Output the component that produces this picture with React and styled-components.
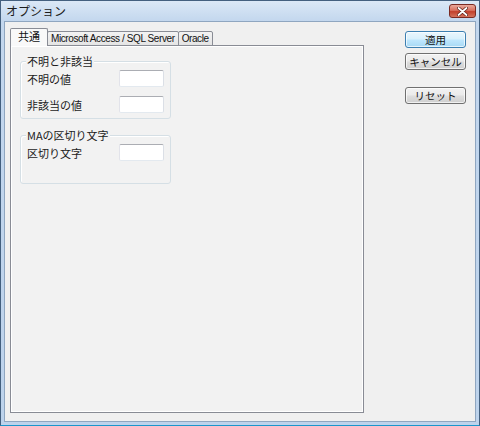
import React from 'react';
import styled, { createGlobalStyle } from 'styled-components';

const GlobalStyle = createGlobalStyle`
  body {
    margin: 0;
    background: #f0f0f0;
    font-family: "Liberation Sans", "Noto Sans CJK JP", sans-serif;
  }
`;

const Window = styled.div`
  width: 480px;
  height: 426px;
  box-sizing: border-box;
  display: flex;
  flex-direction: column;
  padding: 0 3px 3px 3px;
  border: 1px solid #44607f;
  border-bottom-color: #1a96cc;
  background: linear-gradient(to bottom, #dbe8f6 0px, #c3d7ee 20px, #bdd3ec 100%);
`;

const TitleBar = styled.div`
  height: 20px;
  display: flex;
  align-items: flex-start;
  justify-content: space-between;
  padding-left: 2px;
`;

const Title = styled.span`
  font-family: "Noto Sans CJK JP", sans-serif;
  font-size: 12px;
  line-height: 20px;
  color: #1b1b1b;
`;

const CloseButton = styled.div`
  width: 27px;
  height: 14px;
  margin-top: 3px;
  box-sizing: border-box;
  border: 1px solid #7a2a22;
  border-radius: 3px;
  background: linear-gradient(to bottom, #e9a99c 0%, #d8705f 45%, #c2402c 55%, #d4735d 100%);
  display: flex;
  align-items: center;
  justify-content: center;
`;

const Client = styled.div`
  flex: 1;
  display: flex;
  background: #f0f0f0;
  border: 1px solid #8fa6c0;
  padding: 7px 0 8px 5px;
`;

const TabControl = styled.div`
  width: 354px;
  display: flex;
  flex-direction: column;
`;

const TabStrip = styled.div`
  display: flex;
  align-items: flex-end;
  height: 17px;
  position: relative;
  z-index: 1;
  margin-bottom: -1px;
`;

const Tab = styled.div`
  height: ${p => (p.$active ? '18px' : '15px')};
  box-sizing: border-box;
  padding: 0 ${p => (p.$active ? '7px' : '3px')};
  margin-left: ${p => (p.$active ? '0' : '-1px')};
  border: 1px solid #898c95;
  border-bottom: ${p => (p.$active ? 'none' : '1px solid #898c95')};
  border-radius: 2px 2px 0 0;
  background: ${p => (p.$active ? '#f9f9f9' : 'linear-gradient(to bottom, #f3f3f3, #e4e4e4)')};
  font-size: ${p => (p.$active ? '11px' : '10px')};
  letter-spacing: ${p => (p.$active ? '0' : '-0.4px')};
  line-height: ${p => (p.$active ? '16px' : '13px')};
  color: #111;
  white-space: nowrap;
  font-family: "Liberation Sans", "Noto Sans CJK JP", sans-serif;
`;

const Panel = styled.div`
  flex: 1;
  border: 1px solid #898c95;
  box-shadow: inset 1px 1px 0 #ffffff, inset -1px -1px 0 #ffffff;
  background: #f2f2f2;
  padding: 9px 0 0 9px;
`;

const Group = styled.fieldset`
  width: 151px;
  box-sizing: border-box;
  margin: ${p => p.$gap || 0}px 0 0 0;
  padding: 2px 6px ${p => p.$padBottom}px 6px;
  border: 1px solid #d5dfe5;
  border-radius: 3px;
  box-shadow: inset 1px 1px 0 #ffffff;
  display: flex;
  flex-direction: column;
  gap: 9px;
`;

const Legend = styled.legend`
  padding: 0 1px;
  margin-left: -1px;
  font-family: "Noto Sans CJK JP", sans-serif;
  font-size: 11px;
  line-height: 13px;
  color: #1b1b1b;
  background: #f2f2f2;
`;

const Row = styled.div`
  display: flex;
  align-items: center;
  justify-content: space-between;
  height: 17px;
`;

const Label = styled.span`
  font-family: "Noto Sans CJK JP", sans-serif;
  font-size: 11px;
  color: #1b1b1b;
`;

const TextBox = styled.input`
  width: 45px;
  height: 17px;
  box-sizing: border-box;
  margin: 0;
  padding: 0 2px;
  border: 1px solid;
  border-color: #abadb3 #dbdfe6 #e3e9ef #e2e3ea;
  border-radius: 2px;
  background: #ffffff;
  outline: none;
`;

const ButtonColumn = styled.div`
  display: flex;
  flex-direction: column;
  margin: 2px 0 0 41px;
  gap: 5px;
`;

const Button = styled.div`
  width: 61px;
  height: 17px;
  box-sizing: border-box;
  margin-top: ${p => p.$spaced ? '12px' : '0'};
  border: 1px solid ${p => (p.$default ? '#3c7fb1' : '#707070')};
  border-radius: 3px;
  background: ${p => p.$default
    ? 'linear-gradient(to bottom, #eaf6fd 0%, #d9f0fc 45%, #bee6fd 55%, #a7d9f5 100%)'
    : 'linear-gradient(to bottom, #f2f2f2 0%, #ebebeb 45%, #dddddd 55%, #cfcfcf 100%)'};
  box-shadow: inset 0 0 0 1px rgba(255, 255, 255, 0.7);
  display: flex;
  align-items: center;
  justify-content: center;
  font-family: "Noto Sans CJK JP", sans-serif;
  font-size: 10.5px;
  color: #111;
`;

export default function App() {
  return (
    <>
      <GlobalStyle />
      <Window>
        <TitleBar>
          <Title>オプション</Title>
          <CloseButton>
            <svg width="11" height="9" viewBox="0 0 11 9">
              <path d="M1.5 1 L9.5 8 M9.5 1 L1.5 8" stroke="#5a1c14" strokeWidth="3.2" strokeLinecap="round" />
              <path d="M1.5 1 L9.5 8 M9.5 1 L1.5 8" stroke="#ffffff" strokeWidth="1.8" strokeLinecap="round" />
            </svg>
          </CloseButton>
        </TitleBar>
        <Client>
          <TabControl>
            <TabStrip>
              <Tab $active>共通</Tab>
              <Tab>Microsoft Access / SQL Server</Tab>
              <Tab>Oracle</Tab>
            </TabStrip>
            <Panel>
              <Group $padBottom={5}>
                <Legend>不明と非該当</Legend>
                <Row>
                  <Label>不明の値</Label>
                  <TextBox />
                </Row>
                <Row>
                  <Label>非該当の値</Label>
                  <TextBox />
                </Row>
              </Group>
              <Group $gap={10} $padBottom={22}>
                <Legend>MAの区切り文字</Legend>
                <Row>
                  <Label>区切り文字</Label>
                  <TextBox />
                </Row>
              </Group>
            </Panel>
          </TabControl>
          <ButtonColumn>
            <Button $default>適用</Button>
            <Button>キャンセル</Button>
            <Button $spaced>リセット</Button>
          </ButtonColumn>
        </Client>
      </Window>
    </>
  );
}
